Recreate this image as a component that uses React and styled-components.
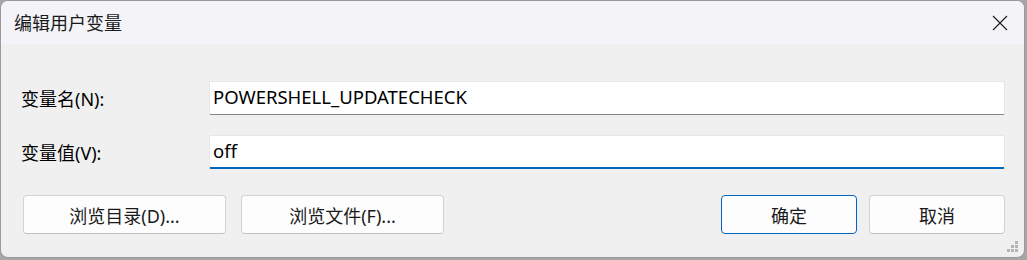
import React from 'react'
import styled, { createGlobalStyle } from 'styled-components'

const GlobalStyle = createGlobalStyle`
    html, body {
        margin: 0;
        padding: 0;
        background: #a6a6a6;
    }
    body {
        font-family: "Noto Sans", "Noto Sans CJK SC", sans-serif;
    }
`;

function App() {
    return (
        <>
            <GlobalStyle />
            <Dialog>
                <TitleBar>
                    <TitleText>编辑用户变量</TitleText>
                    <CloseButton aria-label="关闭">
                        <svg width="16" height="16" viewBox="0 0 16 16">
                            <path d="M1 1 L15 15 M15 1 L1 15" stroke="#1b1b1b" strokeWidth="1.1" fill="none" />
                        </svg>
                    </CloseButton>
                </TitleBar>
                <Body>
                    <Form>
                        <Label>变量名(N):</Label>
                        <Field defaultValue="POWERSHELL_UPDATECHECK" />
                        <Label>变量值(V):</Label>
                        <Field focused defaultValue="off" />
                    </Form>
                    <ButtonRow>
                        <ButtonGroup>
                            <Button wide>浏览目录(D)...</Button>
                            <Button wide>浏览文件(F)...</Button>
                        </ButtonGroup>
                        <ButtonGroup gap="12px">
                            <Button primary>确定</Button>
                            <Button>取消</Button>
                        </ButtonGroup>
                    </ButtonRow>
                </Body>
                <Grip width="14" height="14" viewBox="0 0 14 14">
                    {[[8, 0], [4, 4], [8, 4], [0, 8], [4, 8], [8, 8]].map(([x, y]) => (
                        <rect key={x + '-' + y} x={x} y={y} width="3" height="3" fill="#b5b5b5" />
                    ))}
                </Grip>
            </Dialog>
        </>
    )
}

const Dialog = styled.div`
    position: relative;
    box-sizing: border-box;
    width: 1025px;
    height: 258px;
    background: #f0f0f0;
    border: 1px solid #9a9a9a;
    border-radius: 8px;
    overflow: hidden;
    display: flex;
    flex-direction: column;
`;

const TitleBar = styled.div`
    display: flex;
    align-items: center;
    justify-content: space-between;
    height: 43px;
    background: #f3f3f8;
    padding-left: 13px;
`;

const TitleText = styled.div`
    font-size: 18px;
    color: #1a1a1a;
    line-height: 1;
`;

const CloseButton = styled.div`
    display: flex;
    align-items: center;
    justify-content: center;
    width: 46px;
    height: 43px;
    margin-right: 1px;
`;

const Body = styled.div`
    display: flex;
    flex-direction: column;
    padding: 37px 19px 0 20px;
`;

const Form = styled.div`
    display: grid;
    grid-template-columns: 188px 1fr;
    row-gap: 20px;
    align-items: center;
`;

const Label = styled.div`
    font-size: 18px;
    color: #000;
    margin-top: -1px;
`;

const Field = styled.input`
    box-sizing: border-box;
    height: 34px;
    margin: 0;
    padding: 0 4px 3px 3px;
    font-family: "Noto Sans", "Noto Sans CJK SC", sans-serif;
    font-size: 18.5px;
    color: #000;
    background: #fff;
    border: 1px solid #e6e6e6;
    border-bottom: ${props => props.focused ? '2px solid #0067c0' : '1px solid #858585'};
    border-radius: 2px;
    outline: none;
`;

const ButtonRow = styled.div`
    display: flex;
    justify-content: space-between;
    margin-top: 26px;
    padding-left: 2px;
`;

const ButtonGroup = styled.div`
    display: flex;
    gap: ${props => props.gap || '15px'};
`;

const Button = styled.div`
    box-sizing: border-box;
    display: flex;
    align-items: center;
    justify-content: center;
    width: ${props => props.wide ? '203px' : '136px'};
    height: 39px;
    font-size: 18px;
    color: #1a1a1a;
    background: #fdfdfd;
    border: 1px solid ${props => props.primary ? '#0067c0' : '#d3d3d3'};
    border-bottom-color: ${props => props.primary ? '#0067c0' : '#c2c2c2'};
    border-radius: 4px;
`;

const Grip = styled.svg`
    position: absolute;
    right: 3px;
    bottom: 2px;
`;

export default App
